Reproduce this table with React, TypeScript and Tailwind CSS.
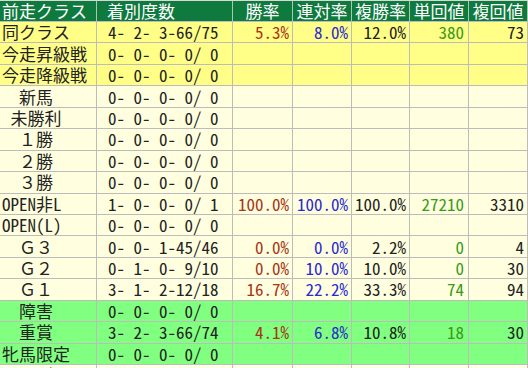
import React from "react";

type Row = {
  name: string;
  rec: string;
  w?: string;
  r?: string;
  f?: string;
  t?: string;
  p?: string;
  bg: "y" | "c" | "g" | "w";
};

const rows: Row[] = [
  { name: "同クラス", rec: "4- 2- 3-66/75", w: "5.3%", r: "8.0%", f: "12.0%", t: "380", p: "73", bg: "y" },
  { name: "今走昇級戦", rec: "0- 0- 0- 0/ 0", bg: "y" },
  { name: "今走降級戦", rec: "0- 0- 0- 0/ 0", bg: "y" },
  { name: "　新馬", rec: "0- 0- 0- 0/ 0", bg: "c" },
  { name: " 未勝利", rec: "0- 0- 0- 0/ 0", bg: "c" },
  { name: "　１勝", rec: "0- 0- 0- 0/ 0", bg: "c" },
  { name: "　２勝", rec: "0- 0- 0- 0/ 0", bg: "c" },
  { name: "　３勝", rec: "0- 0- 0- 0/ 0", bg: "c" },
  { name: "OPEN非L", rec: "1- 0- 0- 0/ 1", w: "100.0%", r: "100.0%", f: "100.0%", t: "27210", p: "3310", bg: "c" },
  { name: "OPEN(L)", rec: "0- 0- 0- 0/ 0", bg: "c" },
  { name: "　Ｇ３", rec: "0- 0- 1-45/46", w: "0.0%", r: "0.0%", f: "2.2%", t: "0", p: "4", bg: "c" },
  { name: "　Ｇ２", rec: "0- 1- 0- 9/10", w: "0.0%", r: "10.0%", f: "10.0%", t: "0", p: "30", bg: "c" },
  { name: "　Ｇ１", rec: "3- 1- 2-12/18", w: "16.7%", r: "22.2%", f: "33.3%", t: "74", p: "94", bg: "c" },
  { name: "　障害", rec: "0- 0- 0- 0/ 0", bg: "g" },
  { name: "　重賞", rec: "3- 2- 3-66/74", w: "4.1%", r: "6.8%", f: "10.8%", t: "18", p: "30", bg: "g" },
  { name: "牝馬限定", rec: "0- 0- 0- 0/ 0", bg: "g" },
  { name: "　　ダ", rec: "1- 0- 0- 1/ 2", w: "50.0%", r: "50.0%", f: "50.0%", t: "10865", p: "1055", bg: "w" },
];

const bgClass = {
  y: "bg-[#ffff88]",
  c: "bg-[#ffffe0]",
  g: "bg-[#80ff80]",
  w: "bg-[#ffffe8]",
};

const font = "font-['Noto_Sans_Mono_CJK_JP','Noto_Sans_CJK_JP',monospace]";

export default function App() {
  return (
    <div className={`w-[528px] h-[368px] overflow-hidden bg-white ${font} text-[17px] leading-[18px] text-[#222]`}>
      <div className="border-t border-[#d8d8d8]">
        <div className="grid grid-cols-[97px_136px_60px_59px_58px_59px_59px] h-[21px] bg-[#0e7a3e] text-white border-b border-[#bcbcbc]">
          <div className="border-r border-[#a8c8b0] flex items-center pl-[2px] whitespace-pre">前走クラス</div>
          <div className="border-r border-[#a8c8b0] flex items-center pl-[10px]">着別度数</div>
          <div className="border-r border-[#a8c8b0] flex items-center justify-center">勝率</div>
          <div className="border-r border-[#a8c8b0] flex items-center justify-center">連対率</div>
          <div className="border-r border-[#a8c8b0] flex items-center justify-center">複勝率</div>
          <div className="border-r border-[#a8c8b0] flex items-center justify-center">単回値</div>
          <div className="border-r border-[#a8c8b0] flex items-center justify-center">複回値</div>
        </div>
        {rows.map((row, i) => (
          <div
            key={i}
            className={`grid grid-cols-[97px_136px_60px_59px_58px_59px_59px] h-[21.45px] ${bgClass[row.bg]} border-b border-[#bcbcbc]`}
          >
            <div className="border-r border-[#bcbcbc] flex items-center pl-[2px] whitespace-pre">{row.name}</div>
            <div className="border-r border-[#bcbcbc] flex items-center pl-[11px] whitespace-pre">{row.rec}</div>
            <div className="border-r border-[#bcbcbc] flex items-center justify-end pr-[3px] text-[#a83418]">{row.w}</div>
            <div className="border-r border-[#bcbcbc] flex items-center justify-end pr-[3px] text-[#2a2ad0]">{row.r}</div>
            <div className="border-r border-[#bcbcbc] flex items-center justify-end pr-[3px]">{row.f}</div>
            <div className="border-r border-[#bcbcbc] flex items-center justify-end pr-[4px] text-[#3a9a1a]">{row.t}</div>
            <div className="border-r border-[#bcbcbc] flex items-center justify-end pr-[3px]">{row.p}</div>
          </div>
        ))}
      </div>
    </div>
  );
}
